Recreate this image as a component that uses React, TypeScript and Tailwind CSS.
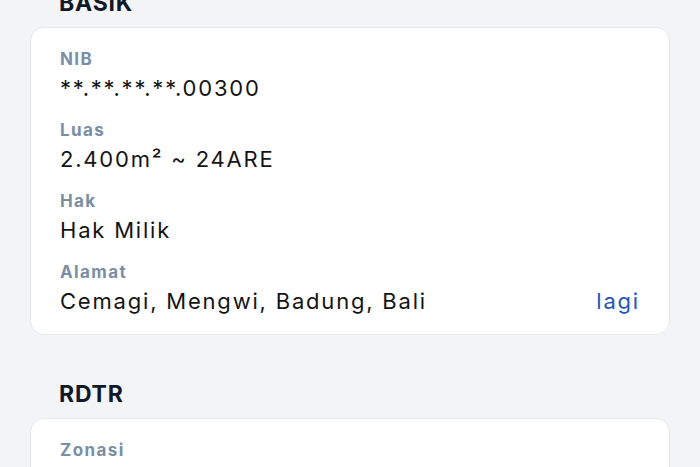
import React from "react";

type Field = {
  label: string;
  value: string;
  more?: boolean;
};

const basik: Field[] = [
  { label: "NIB", value: "**.**.**.**.00300" },
  { label: "Luas", value: "2.400m² ~ 24ARE" },
  { label: "Hak", value: "Hak Milik" },
  { label: "Alamat", value: "Cemagi, Mengwi, Badung, Bali", more: true },
];

const rdtr: Field[] = [{ label: "Zonasi", value: "Perumahan" }];

function Section({ title, fields }: { title: string; fields: Field[] }) {
  return (
    <section>
      <h2 className="pl-[29px] text-[23px] leading-[28px] font-bold tracking-[0.8px] text-[#111827]">{title}</h2>
      <div className="mt-[10px] rounded-[14px] border border-[#e6e8ec] bg-white px-[29px] pt-[20px] pb-[19px]">
        <div className="flex flex-col gap-[17px]">
          {fields.map((f) => (
            <div key={f.label}>
              <div className="text-[17px] leading-[22px] font-bold tracking-[1.4px] text-[#7a8ea5]">{f.label}</div>
              <div className="mt-[4px] flex items-baseline justify-between text-[22px] leading-[28px] tracking-[1.8px] text-[#141414]">
                <span>{f.value}</span>
                {f.more ? <span className="text-[#2455b8]">lagi</span> : null}
              </div>
            </div>
          ))}
        </div>
      </div>
    </section>
  );
}

export default function App() {
  return (
    <div className="h-[467px] overflow-hidden bg-[#f3f4f6] font-['Inter',sans-serif]">
      <div className="mt-[-11px] flex flex-col gap-[45px] px-[30px]">
        <Section title="BASIK" fields={basik} />
        <Section title="RDTR" fields={rdtr} />
      </div>
    </div>
  );
}
